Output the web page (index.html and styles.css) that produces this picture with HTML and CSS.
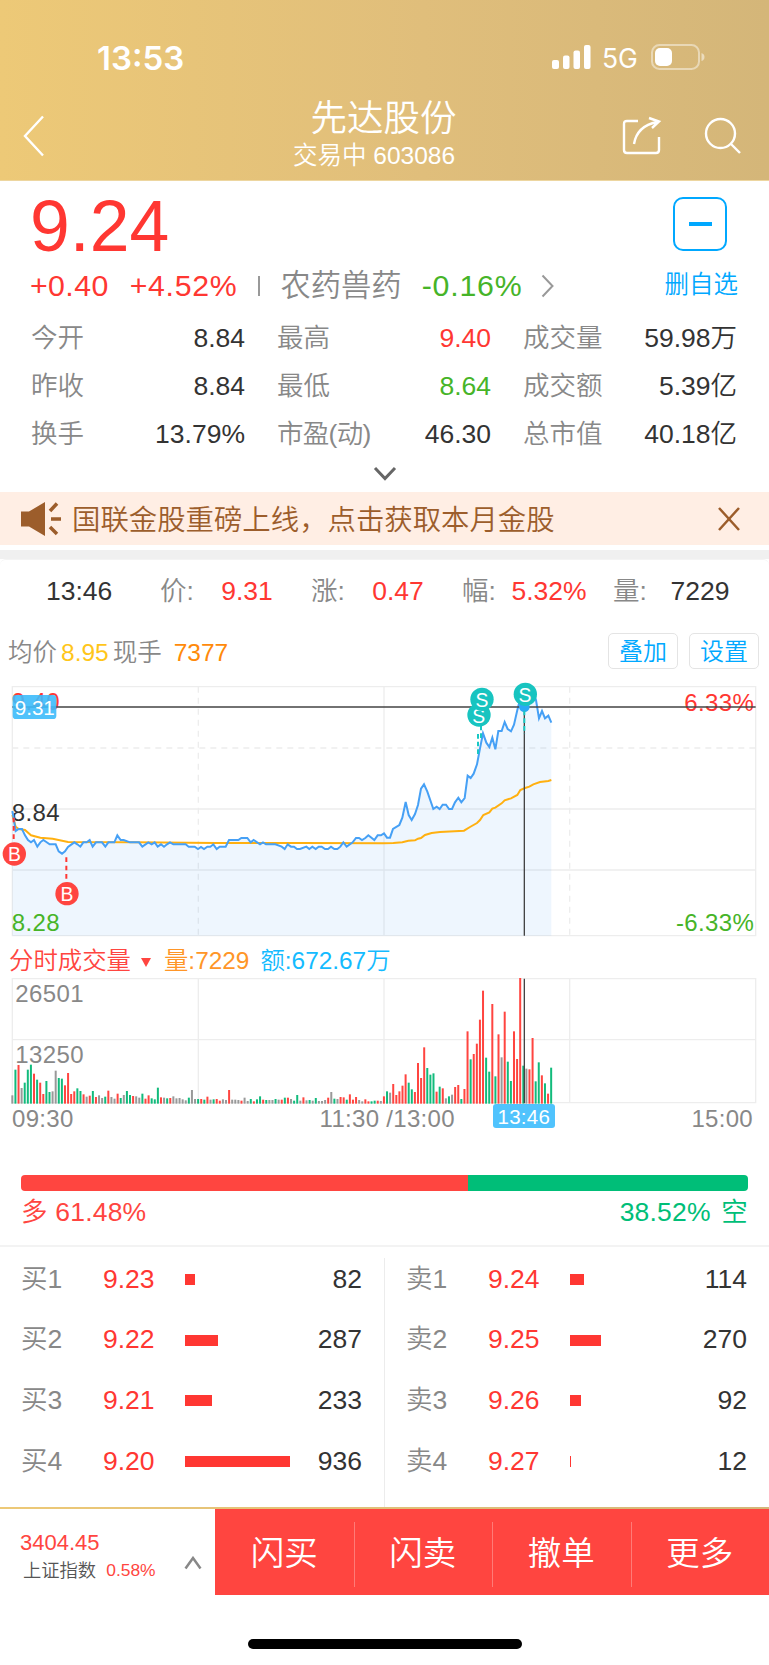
FILE: index.html
```html
<!DOCTYPE html>
<html lang="zh-CN">
<head>
<meta charset="utf-8">
<title>先达股份 603086</title>
<link rel="stylesheet" href="styles.css">
</head>
<body>
<div class="header">
    <div class="status">
        <div class="clock">13:53</div>
        <div class="signals">
            <svg class="cell" width="39" height="25" viewBox="0 0 39 25">
                <rect x="0" y="15" width="7" height="9" rx="2"/>
                <rect x="11" y="10.500" width="6.500" height="13.500" rx="2"/>
                <rect x="21.500" y="5.500" width="6.500" height="18.500" rx="2"/>
                <rect x="32" y="0" width="6.500" height="24" rx="2"/>
            </svg>
            <span class="net">5G</span>
            <svg width="54" height="26" viewBox="0 0 54 26">
                <rect x="1" y="1" width="47" height="24" rx="7.500" fill="none" stroke="#fff" stroke-opacity=".45" stroke-width="2"/>
                <rect x="4" y="4" width="17" height="18" rx="5" fill="#fff"/>
                <path d="M50.500 9 Q53.500 10 53.500 13 Q53.500 16 50.500 17 Z" fill="#fff" fill-opacity=".5"/>
            </svg>
        </div>
    </div>
    <div class="nav">
        <svg class="back" width="22" height="42" viewBox="0 0 22 42"><path d="M20 1.500 L2 21 L20 40.500"/></svg>
        <div class="title">
            <div class="name">先达股份</div>
            <div class="code">交易中 603086</div>
        </div>
        <div class="tools">
            <svg width="40" height="40" viewBox="0 0 40 40">
                <path d="M16 5 H5 Q2 5 2 8 V34 Q2 37 5 37 H34 Q37 37 37 34 V21"/>
                <path d="M12 28 Q15 10 35 6 M27 2 L37 5.500 L30 12"/>
            </svg>
            <svg width="38" height="40" viewBox="0 0 38 40">
                <circle cx="16.500" cy="17.500" r="14.500"/>
                <path d="M26.500 27.500 L36 37"/>
            </svg>
        </div>
    </div>
</div>

<div class="quote">
    <div class="quoteTop">
        <div>
            <div class="price red">9.24</div>
            <div class="change">
                <span class="red">+0.40</span>
                <span class="red pct">+4.52%</span>
                <i class="bar"></i>
                <span class="sector">农药兽药</span>
                <span class="green">-0.16%</span>
                <svg width="13" height="24" viewBox="0 0 13 24"><path d="M1.500 1.500 L11.500 12 L1.500 22.500"/></svg>
            </div>
        </div>
        <div class="fav">
            <div class="favBox"><i></i></div>
            <div>删自选</div>
        </div>
    </div>
    <div class="stats">
        <div><span>今开</span><b>8.84</b></div>
        <div><span>最高</span><b class="red">9.40</b></div>
        <div><span>成交量</span><b>59.98万</b></div>
        <div><span>昨收</span><b>8.84</b></div>
        <div><span>最低</span><b class="green">8.64</b></div>
        <div><span>成交额</span><b>5.39亿</b></div>
        <div><span>换手</span><b>13.79%</b></div>
        <div><span class="pe">市盈(动)</span><b>46.30</b></div>
        <div><span>总市值</span><b>40.18亿</b></div>
    </div>
    <svg class="more" width="24" height="16" viewBox="0 0 24 16"><path d="M2 2 L12 12.500 L22 2"/></svg>
</div>

<div class="notice">
    <svg width="42" height="36" viewBox="0 0 42 36">
        <path d="M1 10.500 H9 L25 1 V35 L9 25.500 H1 Z" fill="#9c5d2b"/>
        <path d="M30 10 L37 2.500 M31 18 H41 M30 26 L37 33" stroke="#9c5d2b" stroke-width="3.500"/>
    </svg>
    <div class="noticeText">国联金股重磅上线，点击获取本月金股</div>
    <svg width="24" height="26" viewBox="0 0 24 26"><path d="M2 2 L22 24 M22 2 L2 24" stroke="#9c5d2b" stroke-width="2.500"/></svg>
</div>
<div class="gap"></div>

<div class="tick">
    <span>13:46</span>
    <span class="k">价:</span><span class="v red">9.31</span>
    <span class="k">涨:</span><span class="v red">0.47</span>
    <span class="k">幅:</span><span class="v red">5.32%</span>
    <span class="k">量:</span><span class="v">7229</span>
</div>

<div class="avgRow">
    <div class="avg">均价<span class="yellow">8.95</span>现手<span class="orange">7377</span></div>
    <div class="but">叠加</div>
    <div class="but">设置</div>
</div>

<!-- one minute is 9.29 units wide, three units per pixel -->
<svg class="chart" width="769" height="262" viewBox="0 0 2307 786">
    <g class="grid">
        <path d="M37 20 H2267 V767 H37 Z M37 387 H2267 M37 570 H2267 M1152 20 V767"/>
        <path d="M37 204 H2267 M595 20 V767 M1709 20 V767" stroke-dasharray="18 15"/>
    </g>
    <path id="area" fill="#46a0f5" fill-opacity=".09"/>
    <text x="35" y="91" class="red">9.40</text>
    <text x="2263" y="92" class="red" text-anchor="end">6.33%</text>
    <text x="35" y="423" class="dark">8.84</text>
    <text x="35" y="752" class="green">8.28</text>
    <text x="2263" y="752" class="green" text-anchor="end">-6.33%</text>
    <polyline class="avgLine" points="37,405 47,440 56,447 75,450 93,466 121,473 158,476 204,486 400,487 650,489 900,489 1150,490 1180,489 1207,487 1225,482 1245,481 1254,476 1263,474 1275,465 1295,459 1320,456 1392,452 1410,441 1431,429 1440,420 1450,405 1468,397 1477,386 1486,383 1505,370 1514,361 1533,355 1552,345 1561,330 1575,324 1588,320 1600,313 1620,306 1645,303 1654,300"/>
    <polyline class="priceLine" id="price" points="37,393 41,415 47,453 56,447 66,447 75,466 84,480 93,487 102,480 112,500 121,487 130,480 139,486 149,493 167,493 176,514 186,521 195,514 204,501 223,487 232,493 241,500 250,487 260,487 269,480 278,500 288,487 306,487 316,500 325,487 343,487 352,466 362,480 371,480 390,487 417,487 427,500 445,487 455,493 464,487 473,500 483,493 492,500 501,493 510,487 520,493 557,493 566,500 584,500 594,507 603,501 612,507 622,500 631,500 640,493 650,507 659,500 677,500 687,480 715,480 724,474 742,474 752,487 761,480 780,493 789,487 798,493 826,493 845,500 854,507 863,493 873,500 882,500 891,507 900,507 919,500 928,507 937,500 947,507 956,500 965,500 975,507 984,507 993,500 1003,507 1012,507 1021,500 1030,487 1040,500 1058,487 1068,474 1077,474 1086,480 1096,474 1105,466 1123,480 1133,466 1143,466 1152,460 1161,473 1170,473 1179,447 1198,435 1207,413 1217,366 1226,405 1235,420 1245,402 1254,375 1263,326 1272,313 1282,335 1300,387 1310,380 1319,387 1328,374 1338,374 1347,387 1356,387 1365,367 1375,353 1384,367 1394,354 1403,287 1412,294 1421,281 1431,253 1440,205 1449,160 1459,188 1468,201 1477,173 1486,208 1495,153 1505,153 1514,126 1523,147 1533,154 1542,134 1552,90 1561,55 1573,80 1590,45 1600,40 1608,60 1617,115 1626,93 1635,115 1645,107 1654,128"/>
    <path class="cross" d="M37 81 H2267 M1573 20 V767"/>
    <rect x="38" y="45" width="131" height="72" rx="10" fill="#3dbbfb" fill-opacity=".9"/>
    <text x="44" y="106" class="chip">9.31</text>
    <circle cx="1573" cy="80" r="16" fill="#2aa8f5"/>
    <path class="buy" d="M41 413 V487 M199 532 V606"/>
    <path class="sell" d="M1443 137 V180 M1434 162 V222 M1573 92 V162"/>
    <g class="mark buyMark">
        <circle cx="43" cy="522" r="35"/><text x="43" y="543">B</text>
        <circle cx="201" cy="641" r="35"/><text x="201" y="662">B</text>
    </g>
    <g class="mark sellMark">
        <circle cx="1437" cy="105" r="35"/><text x="1436" y="128">S</text>
        <circle cx="1446" cy="58" r="35"/><text x="1446" y="80">S</text>
        <circle cx="1576" cy="43" r="35"/><text x="1575" y="66">S</text>
    </g>
</svg>

<div class="volHead">
    <span class="volName">分时成交量</span><i class="tri"></i><span class="volQty">量:7229</span><span class="volSum">额:672.67万</span>
</div>
<svg class="chart" width="769" height="128" viewBox="0 0 2307 384">
    <path class="grid" d="M37 8 H2267 V380 H37 Z M37 191 H2267 M595 8 V380 M1152 8 V380 M1709 8 V380"/>
    <text x="46" y="77" class="gray">26501</text>
    <text x="46" y="261" class="gray">13250</text>
    <g id="volumes"></g>
    <path class="cross" d="M1573 8 V382"/>
</svg>
<div class="times">
    <span>09:30</span>
    <span class="noon">11:30 /13:00</span>
    <span class="now">13:46</span>
    <span class="end">15:00</span>
</div>

<div class="ratio">
    <div class="ratioBar"><i class="long" style="width: 61.48%"></i><i class="short"></i></div>
    <div class="ratioText"><span class="long">多 61.48%</span><span class="short">38.52% 空</span></div>
</div>

<div class="depth">
    <div class="side">
        <div class="level"><span>买1</span><b class="red">9.23</b><i style="width: 9.500px"></i><em>82</em></div>
        <div class="level"><span>买2</span><b class="red">9.22</b><i style="width: 33px"></i><em>287</em></div>
        <div class="level"><span>买3</span><b class="red">9.21</b><i style="width: 26.500px"></i><em>233</em></div>
        <div class="level"><span>买4</span><b class="red">9.20</b><i style="width: 105px"></i><em>936</em></div>
    </div>
    <div class="side">
        <div class="level"><span>卖1</span><b class="red">9.24</b><i style="width: 13.500px"></i><em>114</em></div>
        <div class="level"><span>卖2</span><b class="red">9.25</b><i style="width: 30.500px"></i><em>270</em></div>
        <div class="level"><span>卖3</span><b class="red">9.26</b><i style="width: 11px"></i><em>92</em></div>
        <div class="level"><span>卖4</span><b class="red">9.27</b><i style="width: 1.400px"></i><em>12</em></div>
    </div>
</div>

<div class="footer">
    <div class="index">
        <div>
            <div class="indexVal">3404.45</div>
            <div class="indexName">上证指数 <span>0.58%</span></div>
        </div>
        <svg width="18" height="14" viewBox="0 0 18 14"><path d="M1.500 12.500 L9 2 L16.500 12.500"/></svg>
    </div>
    <div class="act">闪买</div>
    <div class="act">闪卖</div>
    <div class="act">撤单</div>
    <div class="act">更多</div>
</div>
<div class="home"></div>
<script src="chart.js"></script>
</body>
</html>
```
FILE: styles.css
```css
body {
    margin: 0;
    width: 769px;
    height: 1665px;
    overflow: hidden;
    background: #fff;
    color: #333;
    font-family: "Liberation Sans", "Noto Sans CJK SC", sans-serif;
    font-weight: 350;
    font-size: 26.5px;
    line-height: 1.2;
    white-space: nowrap;
}
svg {
    display: block;
    fill: none;
    flex-shrink: 0;
}
b, i, em {
    font-weight: inherit;
    font-style: normal;
}
.red { color: #ff3732; fill: #ff3732; }
.green { color: #46b428; fill: #46b428; }
.gray { color: #888; fill: #888; }
.dark { fill: #333; }
.yellow { color: #ffc61a; }
.orange { color: #ff8a0a; }

.header {
    height: 180px;
    border-bottom: 1px solid #edd6a0;
    background: linear-gradient(90deg, #edc977 0%, #e0be7b 55%, #d4b679 100%);
    color: #fff;
}
.status {
    display: flex;
    justify-content: space-between;
    height: 95px;
    padding: 0 64px 0 97px;
}
.clock {
    font-family: Inter, sans-serif;
    font-weight: 600;
    font-size: 33px;
    line-height: 40px;
    padding-top: 38px;
}
.signals {
    display: flex;
    align-items: center;
    height: 26px;
    padding-top: 44px;
}
.cell {
    fill: #fff;
}
.net {
    font-family: Inter, sans-serif;
    font-weight: 400;
    font-size: 26.5px;
    width: 36px;
    margin: 4px 13px 0 11px;
}
.nav {
    display: grid;
    grid-template-columns: 200px 1fr 200px;
}
.nav svg {
    stroke: #fff;
    stroke-width: 2.4;
}
.back {
    margin: 20px 0 0 23px;
}
.title {
    text-align: center;
}
.name {
    font-size: 36.5px;
    line-height: 44px;
    padding-top: 2px;
    margin-right: 2px;
}
.code {
    font-size: 24.5px;
    line-height: 30px;
    margin: 0 21px 0 0;
}
.tools {
    display: flex;
    gap: 42px;
    padding: 21px 0 0 53px;
}

.quote {
    height: 311px;
}
.quoteTop {
    display: flex;
    justify-content: space-between;
    padding: 0 31px 0 30px;
    height: 134px;
}
.price {
    font-size: 71.5px;
    line-height: 82px;
    padding-top: 4px;
    height: 80px;
}
.change {
    display: flex;
    align-items: center;
    height: 42px;
    font-size: 30.3px;
    letter-spacing: 0.4px;
}
.pct {
    margin-left: 21px;
    letter-spacing: 0.7px;
}
.bar {
    width: 2px;
    height: 20px;
    margin: 0 20px 0 21px;
    background: #999;
}
.sector {
    color: #888;
    margin-right: 20px;
    letter-spacing: 0;
}
.change .green {
    letter-spacing: 0.8px;
}
.change svg {
    margin-left: 19px;
    stroke: #999;
    stroke-width: 2;
}
.fav {
    display: flex;
    flex-direction: column;
    align-items: center;
    padding-top: 16px;
    color: #00a8ff;
    font-size: 24.5px;
    line-height: 32px;
}
.favBox {
    display: flex;
    align-items: center;
    justify-content: center;
    box-sizing: border-box;
    width: 54px;
    height: 54px;
    border: 2px solid #00a8ff;
    border-radius: 10px;
    margin: 0 2px 18px 0;
}
.favBox i {
    width: 23px;
    height: 4px;
    background: #00a8ff;
}
.stats {
    display: grid;
    grid-template-columns: 214px 214px 214px;
    grid-auto-rows: 47.7px;
    column-gap: 32px;
    padding-left: 31px;
}
.stats div {
    display: flex;
    justify-content: space-between;
    align-items: center;
    padding-top: 1px;
}
.stats span {
    color: #888;
}
.stats .pe {
    letter-spacing: -0.7px;
}
.more {
    margin: 8px auto 0;
    stroke: #666;
    stroke-width: 3;
}

.notice {
    display: flex;
    align-items: center;
    height: 53px;
    padding: 0 28px 0 20px;
    background: #ffeee4;
    color: #9c5d2b;
}
.noticeText {
    flex: 1;
    font-size: 28.4px;
    padding-top: 3px;
    margin-left: 10px;
}
.gap {
    height: 9px;
    margin-top: 5px;
    background: #f0f0f0;
}

.tick {
    display: grid;
    grid-template-columns: 114px repeat(4, 46px 105px);
    align-items: center;
    box-sizing: border-box;
    height: 63px;
    padding: 2px 0 0 46px;
    border-top: 1px solid #f4f4f4;
    border-radius: 6px;
    overflow: hidden;
}
.tick .k {
    color: #888;
}
.tick .v {
    text-align: center;
    padding-right: 23px;
}

.avgRow {
    display: flex;
    align-items: center;
    height: 58px;
    padding-right: 10px;
    gap: 11px;
}
.avg {
    flex: 1;
    padding: 3px 0 0 8px;
    color: #888;
    font-size: 24.5px;
}
.avg span {
    margin: 0 4px;
}
.avg .orange {
    margin-left: 12px;
}
.but {
    box-sizing: border-box;
    width: 70px;
    height: 36px;
    border: 1px solid #e4e4e4;
    border-radius: 5px;
    color: #00a8ff;
    font-size: 24px;
    line-height: 36px;
    text-align: center;
}

.chart text {
    font-size: 72px;
    letter-spacing: 1.2px;
}
.grid {
    stroke: #ededed;
    stroke-width: 4;
}
.priceLine {
    stroke: #46a0f5;
    stroke-width: 6;
}
.avgLine {
    stroke: #ffb010;
    stroke-width: 6;
}
.cross {
    stroke: #444;
    stroke-width: 4;
}
.chart .chip {
    font-size: 62px;
    fill: #fff;
    letter-spacing: 0;
}
.buy {
    stroke: #ff3732;
    stroke-width: 6;
    stroke-dasharray: 14 11;
}
.sell {
    stroke: #18c8c4;
    stroke-width: 6;
    stroke-dasharray: 14 9;
}
.chart .mark text {
    font-size: 58px;
    fill: #fff;
    text-anchor: middle;
    letter-spacing: 0;
}
.chart .buyMark { fill: #ff4540; }
.chart .sellMark { fill: #18c4c0; }

.volHead {
    display: flex;
    align-items: center;
    box-sizing: border-box;
    height: 34px;
    padding: 4px 0 0 9px;
    font-size: 24.4px;
}
.volName { color: #ff4540; }
.tri {
    border: 5px solid transparent;
    border-top: 9px solid #ff4540;
    border-bottom: 0;
    margin: 2px 13px 0 10px;
}
.volQty {
    color: #ff9628;
    margin-right: 11px;
}
.volSum { color: #14bbff; }

.times {
    display: flex;
    height: 30px;
    line-height: 30px;
    padding: 0 16px 0 12px;
    color: #888;
    font-size: 24px;
    letter-spacing: 0.3px;
}
.noon {
    margin-left: 246px;
}
.now {
    width: 62px;
    height: 24px;
    margin-left: 38px;
    border-radius: 3px;
    background: #50c3fd;
    color: #fff;
    font-size: 20.5px;
    line-height: 25px;
    text-align: center;
}
.end {
    margin-left: auto;
}

.ratio {
    height: 70px;
    padding: 41px 21px 0;
    border-bottom: 2px solid #f3f3f3;
}
.ratioBar {
    display: flex;
    height: 16px;
    border-radius: 4px;
    overflow: hidden;
}
.ratioBar .long { background: #ff4540; }
.ratioBar .short {
    flex: 1;
    background: #00be78;
}
.ratioText {
    display: flex;
    justify-content: space-between;
    line-height: 42px;
    letter-spacing: 0.2px;
}
.ratioText .long { color: #ff4540; }
.ratioText .short {
    color: #00be78;
    word-spacing: 3px;
}

.depth {
    display: flex;
    padding-top: 11px;
    height: 249px;
}
.side {
    flex: 1;
}
.side + .side {
    border-left: 1px solid #ececec;
}
.level {
    display: grid;
    grid-template-columns: 82px 82px 110px 1fr;
    align-items: center;
    height: 60.8px;
    margin-top: -9px;
    margin-bottom: 9px;
    padding: 0 22px 0 21px;
}
.level span { color: #888; }
.level i {
    height: 11px;
    background: #ff3732;
}
.level em { text-align: right; }

.footer {
    display: flex;
    height: 86px;
    border-top: 2px solid;
    border-image: linear-gradient(90deg, #edc977, #d4b679) 1;
}
.index {
    display: flex;
    box-sizing: border-box;
    width: 215px;
    padding: 20px 13px 0 20px;
    justify-content: space-between;
}
.indexVal {
    color: #ff4540;
    font-size: 22px;
    line-height: 28px;
}
.indexName {
    padding-left: 3px;
    font-size: 18.3px;
    line-height: 28px;
    color: #555;
}
.indexName span {
    color: #ff4540;
    font-size: 17.4px;
    margin-left: 5px;
    position: relative;
    top: -1px;
}
.index svg {
    margin-top: 27px;
    stroke: #888;
    stroke-width: 2.5;
}
.act {
    position: relative;
    flex: 1;
    background: #ff4540;
    color: #fff;
    font-size: 33.5px;
    line-height: 89px;
    height: 86px;
    text-align: center;
}
.act + .act::before {
    content: "";
    position: absolute;
    left: 0;
    top: 13px;
    width: 1px;
    height: 65px;
    background: #ff7b77;
}
.home {
    width: 274px;
    height: 10px;
    margin: 44px auto 0;
    border-radius: 5px;
    background: #000;
}
```
FILE: chart.js
```js
// r: up, g: down, e: flat, the number is the bar height
const volumes = `e25 g102 r116 e47 g63 g102 g117 r90 g72 r63 r29 g68 g35 e37 e99 g77 g75 r55 r92 r29
r37 g46 g38 r28 e21 r24 g38 r20 e25 e17 g21 r39 e20 e15 r30 g17 e26 g38 g26 r23
e22 e18 g30 r15 r25 g16 g13 g48 r19 e18 g16 r17 e22 e16 e17 e13 e10 g18 e41 e14
g14 r14 g12 r21 e12 g13 r14 r9 e13 e11 r41 e12 e12 e11 r9 e18 e8 g14 r7 g13
g22 r12 g11 e11 e11 g14 e12 r12 g18 r18 e14 g9 g26 e9 r19 e10 g11 e9 g17 e8
e8 e11 r18 e35 g15 e14 r20 r19 g12 r28 r12 r20 e11 e7 r13 r7 g7 g9 r9 e8
r22 g37 e33 r59 r26 r37 r54 r88 g63 g43 r35 r122 r77 r169 g107 g87 g91 r36 g51 r46
e16 g22 e27 r50 r56 g14 r44 r217 g133 r149 r180 r252 r339 g138 g96 r299 g82 r208 e139 r276
g126 g68 r217 r134 r377 g114 e105 r103 r197 g67 g124 r85 g61 r30 g108`.split(/\s+/);
const colors = { r: "#ff4540", g: "#12bb7c", e: "#999" };

let bars = "";
volumes.forEach((v, i) => {
    const h = Number(v.slice(1));
    const x = 34 + i * 9.29;
    bars += `<rect x="${x}" y="${383 - h}" width="6" height="${h}" fill="${colors[v[0]]}"/>`;
});
document.getElementById("volumes").innerHTML = bars;

const line = document.getElementById("price").getAttribute("points");
document.getElementById("area").setAttribute("d", `M37 767 L${line} L1654 767 Z`);
```
